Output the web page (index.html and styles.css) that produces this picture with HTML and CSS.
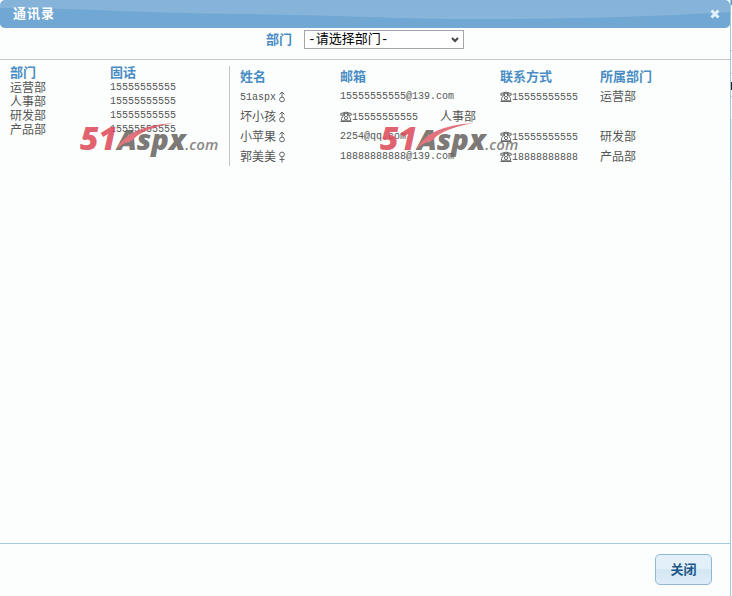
FILE: index.html
```html
<!DOCTYPE html>
<html lang="zh-CN">
<head>
<meta charset="utf-8">
<title>通讯录</title>
<link rel="stylesheet" href="styles.css">
</head>
<body>
<svg width="0" height="0" class="defs" aria-hidden="true">
  <symbol id="male" viewBox="0 0 12 12"><path d="M3.5 3.5 6 1l2.5 2.5M6 1v5"/><circle cx="6" cy="8.5" r="2.4"/></symbol>
  <symbol id="female" viewBox="0 0 12 12"><circle cx="6" cy="3.5" r="2.4"/><path d="M6 6v5.5M3.5 8.5h5"/></symbol>
  <symbol id="phone" viewBox="0 0 12 12"><path d="M.8 4.2V2.5Q6-.2 11.2 2.5v1.7H8.7V2.6H3.3v1.6zM3.5 4.5 1.5 7.5v2.3h9V7.5l-2-3M4.5 3v2M7.5 3v2M.5 10.5h11"/><circle cx="6" cy="7" r="1.6"/></symbol>
  <symbol id="swoosh" viewBox="0 0 140 34"><path d="M37 28Q47 5 94 2 61 8 53 19L43 23z" fill="#e05a67"/></symbol>
</svg>
<div class="page">
  <section class="dialog" role="dialog" aria-labelledby="title">
    <header class="titlebar">
      <svg class="wave" viewBox="0 0 730 28" preserveAspectRatio="none" aria-hidden="true"><path d="M0 8C80 8 140 13 240 14S400 19 480 19 650 17 730 12V28H0z"/></svg>
      <h1 id="title">通讯录</h1>
      <button class="close" aria-label="关闭窗口"><svg viewBox="0 0 10 10"><path d="M1.5 1.5l7 7M8.5 1.5l-7 7"/></svg></button>
    </header>
    <div class="filter">
      <label for="dept">部门</label>
      <select id="dept"><option>-请选择部门-</option></select>
    </div>
    <main class="content">
      <div class="panel departments">
        <table>
          <thead><tr><th>部门</th><th>固话</th></tr></thead>
          <tbody>
            <tr><td>运营部</td><td class="latin">15555555555</td></tr>
            <tr><td>人事部</td><td class="latin">15555555555</td></tr>
            <tr><td>研发部</td><td class="latin">15555555555</td></tr>
            <tr><td>产品部</td><td class="latin">15555555555</td></tr>
          </tbody>
        </table>
        <div class="watermark"><span class="num">51</span><span class="word">Aspx</span><span class="tld">.com</span><svg class="swoosh" aria-hidden="true"><use href="#swoosh"/></svg></div>
      </div>
      <div class="panel people">
        <table>
          <thead><tr><th>姓名</th><th class="mail">邮箱</th><th>联系方式</th><th>所属部门</th></tr></thead>
          <tbody>
            <tr><td><span class="latin">51aspx</span><svg class="sign"><use href="#male"/></svg></td><td class="mail latin">15555555555@139.com</td><td><svg class="sign"><use href="#phone"/></svg><span class="latin">15555555555</span></td><td>运营部</td></tr>
            <tr><td>坏小孩<svg class="sign"><use href="#male"/></svg></td><td><svg class="sign"><use href="#phone"/></svg><span class="latin">15555555555</span></td><td>人事部</td></tr>
            <tr><td>小苹果<svg class="sign"><use href="#male"/></svg></td><td class="mail latin">2254@qq.com</td><td><svg class="sign"><use href="#phone"/></svg><span class="latin">15555555555</span></td><td>研发部</td></tr>
            <tr><td>郭美美<svg class="sign"><use href="#female"/></svg></td><td class="mail latin">18888888888@139.com</td><td><svg class="sign"><use href="#phone"/></svg><span class="latin">18888888888</span></td><td>产品部</td></tr>
          </tbody>
        </table>
        <div class="watermark"><span class="num">51</span><span class="word">Aspx</span><span class="tld">.com</span><svg class="swoosh" aria-hidden="true"><use href="#swoosh"/></svg></div>
      </div>
    </main>
    <footer class="actions"><button class="action">关闭</button></footer>
  </section>
  <div class="backdrop" aria-hidden="true"></div>
</div>
</body>
</html>
```
FILE: styles.css
```css
* { box-sizing: border-box; }
body {
  margin: 0;
  background: #fcfefe;
  color: #555;
  font: 12px/14px "Liberation Sans", "Noto Sans CJK SC", sans-serif;
}
.defs { position: absolute; }
.page { display: flex; min-height: 100vh; }
.dialog {
  flex: 1;
  min-width: 0;
  display: flex;
  flex-direction: column;
}
.titlebar {
  position: relative;
  display: flex;
  align-items: center;
  justify-content: space-between;
  height: 28px;
  padding: 0 10px 0 13px;
  overflow: hidden;
  border-radius: 5px;
  background: linear-gradient(#84b2d8, #8ab7dc);
  color: #fff;
}
.wave { position: absolute; inset: 0; width: 100%; height: 100%; fill: #6ba4d1; fill-opacity: .8; }
h1 {
  position: relative;
  margin: 0;
  font-size: 13px;
  line-height: 26px;
  letter-spacing: 1px;
}
.close {
  position: relative;
  width: 10px;
  height: 10px;
  padding: 0;
  border: 0;
  background: none;
}
.close svg { display: block; width: 10px; height: 10px; stroke: #e3f1fa; stroke-width: 3; }
.filter {
  display: flex;
  justify-content: center;
  align-items: center;
  gap: 12px;
  height: 32px;
  padding-bottom: 8px;
  border-bottom: 1px solid #c3c5ca;
}
.filter label { color: #4a8dc4; font-size: 13px; font-weight: bold; }
select {
  width: 160px;
  height: 19px;
  padding: 0 16px 0 3px;
  appearance: none;
  border: 1px solid #a5a5a5;
  border-radius: 0;
  background: #fff url("data:image/svg+xml,%3Csvg xmlns='http://www.w3.org/2000/svg' width='8' height='6'%3E%3Cpath d='M1 1l3 3 3-3' fill='none' stroke='%23444' stroke-width='2'/%3E%3C/svg%3E") no-repeat right 4px center;
  color: #000;
  font: 13px/17px "Liberation Mono", "Noto Sans CJK SC", monospace;
}
.content { flex: 1; display: flex; align-items: flex-start; padding-top: 6px; }
.panel { position: relative; padding-left: 10px; }
.departments { width: 230px; height: 100px; flex: none; border-right: 1px solid #c3c5ca; }
.people { flex: 1; padding-top: 1px; }
table, thead, tbody { display: block; }
tr { display: flex; height: 14px; }
.departments thead tr { height: 15px; }
th, td { width: 100px; padding: 0; text-align: left; white-space: nowrap; }
th { color: #4a8dc4; font-size: 13px; }
.mail { width: 160px; }
.people tr { height: 20px; line-height: 20px; }
.latin { font-family: "Liberation Mono", monospace; font-size: 10px; }
span.latin { line-height: 14px; vertical-align: 1px; }
.sign {
  width: 12px;
  height: 12px;
  vertical-align: -2px;
  fill: none;
  stroke: #666;
  stroke-width: 1;
}
.watermark {
  position: absolute;
  top: 55px;
  left: 80px;
  display: flex;
  align-items: baseline;
  font: italic 800 29px/34px "Open Sans", "Liberation Sans", sans-serif;
  opacity: .85;
  pointer-events: none;
}
.people .watermark { left: 150px; }
.num { color: #dd4858; font-size: 32px; }
.word { color: #66625f; }
.tld { color: #77736f; font-size: 15px; font-weight: 600; }
.swoosh { position: absolute; top: 0; left: 0; width: 140px; height: 34px; }
.actions {
  display: flex;
  justify-content: flex-end;
  padding: 10px 18px 11px;
  border-top: 1px solid #a6c9dc;
}
.action {
  width: 57px;
  height: 31px;
  padding: 0;
  border: 1px solid #8fb8d6;
  border-radius: 5px;
  background: linear-gradient(#e4f0f9 50%, #d5e7f4 50%, #dcebf7);
  color: #1d5987;
  font: bold 13px/20px "Liberation Sans", "Noto Sans CJK SC", sans-serif;
}
.backdrop {
  width: 2px;
  border-left: 1px solid #9fc5d8;
  background: linear-gradient(#5d9dcc 5px, #fcfefe 5px 50px, #b7d6e4 50px 51px, #fcfefe 51px 73px, #b7d6e4 73px 74px, #fcfefe 74px 82px, #222 82px 90px, #fcfefe 90px 96px, #b7d6e4 96px 97px, #fcfefe 97px 119px, #d9eaf3 119px 180px, #fcfefe 180px);
}
```
